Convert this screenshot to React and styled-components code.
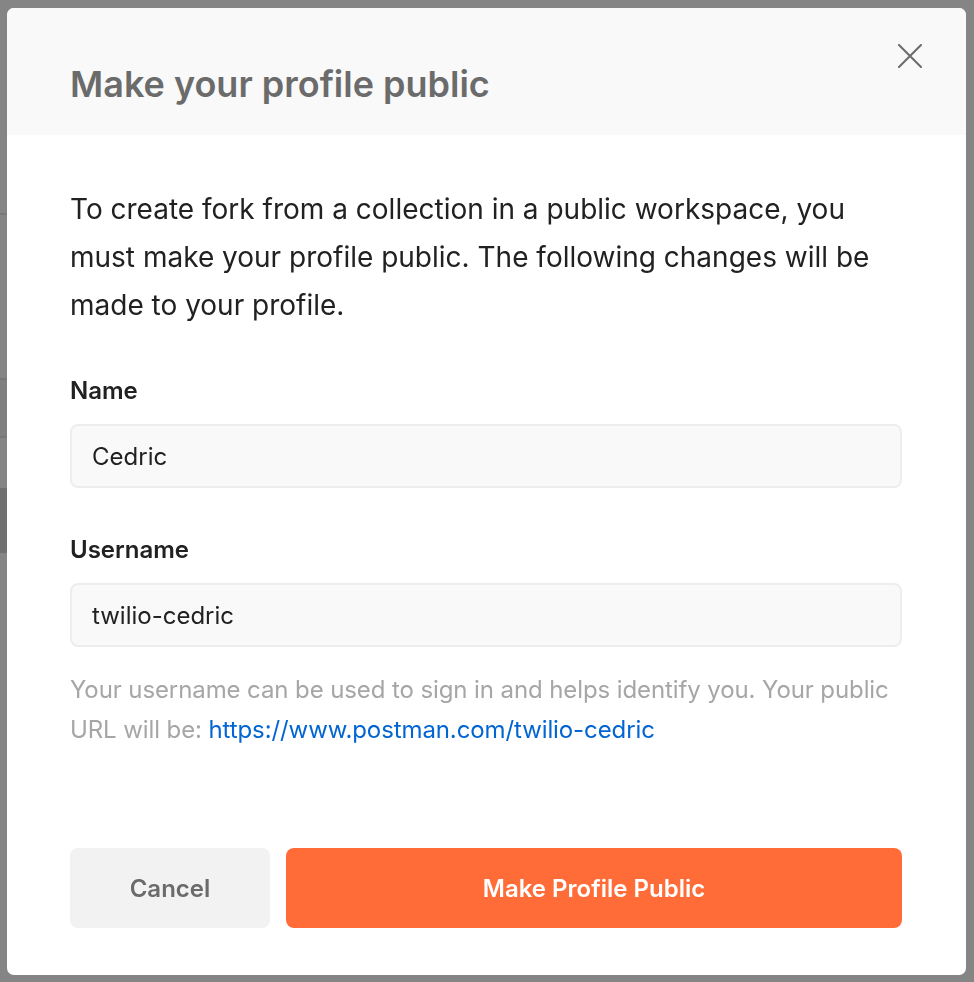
import React from 'react'
import styled, { createGlobalStyle } from 'styled-components'

const GlobalStyle = createGlobalStyle`
    html, body {
        margin: 0;
        padding: 0;
        background: #ffffff;
        font-family: Inter, "Noto Sans", "Liberation Sans", sans-serif;
    }
    * { box-sizing: border-box; }
`;

// the app page that sits behind the dimmed overlay
const Behind = styled.div`
    width: 974px;
    height: 982px;
    display: flex;
    flex-direction: column;
    background: #ffffff;
`;

const BehindRow = styled.div`
    height: ${(props) => props.h}px;
    background: ${(props) => props.bg || '#ffffff'};
    border-bottom: ${(props) => (props.line ? '2px solid #e6e6e6' : 'none')};
    font-size: 26px;
    color: #212121;
    display: flex;
    align-items: center;
    justify-content: flex-end;
    width: 30px;
    overflow: hidden;
    white-space: nowrap;
`;

const Overlay = styled.div`
    position: fixed;
    inset: 0;
    background: rgba(0, 0, 0, 0.48);
    display: flex;
    align-items: flex-start;
    padding: 8px 0 0 7px;
`;

const Modal = styled.div`
    width: 959px;
    height: 967px;
    background: #ffffff;
    border-radius: 7px;
    overflow: hidden;
    display: flex;
    flex-direction: column;
`;

const Header = styled.div`
    height: 127px;
    flex-shrink: 0;
    background: #f9f9f9;
    display: flex;
    align-items: center;
    justify-content: space-between;
    padding: 0 36px 0 63px;
`;

const Title = styled.h1`
    margin: 0;
    margin-top: 24px;
    font-size: 36px;
    font-weight: 600;
    color: #6b6b6b;
`;

const CloseButton = styled.button`
    border: none;
    background: none;
    padding: 0;
    width: 40px;
    height: 40px;
    align-self: flex-start;
    margin-top: 28px;
    display: flex;
    align-items: center;
    justify-content: center;
    cursor: pointer;
`;

const Body = styled.div`
    flex: 1;
    display: flex;
    flex-direction: column;
    padding: 50px 64px 47px 63px;
`;

const Intro = styled.p`
    margin: 0;
    font-size: 28px;
    line-height: 48px;
    color: #212121;
`;

const Label = styled.label`
    display: block;
    font-size: 24px;
    line-height: 32px;
    font-weight: 600;
    color: #212121;
    margin-top: ${(props) => props.top}px;
`;

const Input = styled.input`
    display: block;
    width: 100%;
    height: 64px;
    margin-top: 17px;
    padding: 0 20px;
    border: 2px solid #ededed;
    border-radius: 8px;
    background: #f9f9f9;
    font-family: inherit;
    font-size: 24px;
    color: #212121;
    outline: none;
`;

const Help = styled.p`
    margin: 23px 0 0;
    font-size: 24px;
    line-height: 40px;
    color: #a6a6a6;
    letter-spacing: -0.1px;
`;

const Link = styled.a`
    color: #0265d2;
    text-decoration: none;
`;

const Actions = styled.div`
    margin-top: auto;
    display: flex;
    gap: 16px;
`;

const Button = styled.button`
    height: 80px;
    border: none;
    border-radius: 8px;
    font-family: inherit;
    font-size: 24px;
    font-weight: 600;
    cursor: pointer;
    width: ${(props) => (props.primary ? 'auto' : '200px')};
    flex: ${(props) => (props.primary ? '1' : 'none')};
    background: ${(props) => (props.primary ? '#ff6c37' : '#f2f2f2')};
    color: ${(props) => (props.primary ? '#ffffff' : '#6b6b6b')};
`;

const CloseIcon = () => (
    <svg width="24" height="24" viewBox="0 0 24 24" fill="none">
        <path d="M1 1L23 23M23 1L1 23" stroke="#6b6b6b" strokeWidth="2" strokeLinecap="round" />
    </svg>
)

const App = () => {
    return (
        <>
            <GlobalStyle />
            <Behind>
                <BehindRow h={162} />
                <BehindRow h={53} line>r</BehindRow>
                <BehindRow h={100} />
                <BehindRow h={50}>o</BehindRow>
                <BehindRow h={15} line />
                <BehindRow h={58} bg="#f3f3f3" line />
                <BehindRow h={50} />
                <BehindRow h={65} bg="#d6d6d6" />
            </Behind>
            <Overlay>
                <Modal>
                    <Header>
                        <Title>Make your profile public</Title>
                        <CloseButton aria-label="Close"><CloseIcon /></CloseButton>
                    </Header>
                    <Body>
                        <Intro>
                            To create fork from a collection in a public workspace, you must make your
                            profile public. The following changes will be made to your profile.
                        </Intro>
                        <Label top={46}>Name</Label>
                        <Input defaultValue="Cedric" />
                        <Label top={46}>Username</Label>
                        <Input defaultValue="twilio-cedric" />
                        <Help>
                            Your username can be used to sign in and helps identify you. Your public
                            URL will be: <Link href="#">https://www.postman.com/twilio-cedric</Link>
                        </Help>
                        <Actions>
                            <Button>Cancel</Button>
                            <Button primary>Make Profile Public</Button>
                        </Actions>
                    </Body>
                </Modal>
            </Overlay>
        </>
    )
}

export default App
